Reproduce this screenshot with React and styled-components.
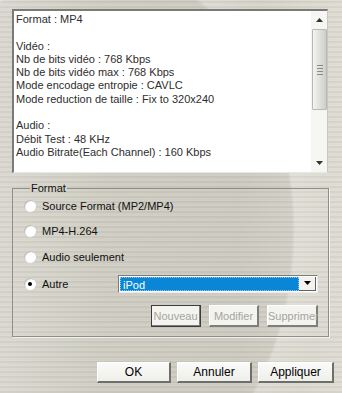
import { createGlobalStyle, styled } from "styled-components";

const Global = createGlobalStyle`
  html, body { margin: 0; padding: 0; }
  body {
    width: 342px;
    height: 393px;
    overflow: hidden;
    font-family: "DejaVu Sans", "Liberation Sans", sans-serif;
  }
`;

const Page = styled.div`
  width: 342px;
  height: 393px;
  box-sizing: border-box;
  padding: 9px 14px 0 12px;
  display: flex;
  flex-direction: column;
  background:
    repeating-linear-gradient(180deg, rgba(255,255,255,0.10) 0 1px, rgba(0,0,0,0.03) 1px 3px, rgba(255,255,255,0.06) 3px 5px),
    radial-gradient(ellipse 320px 440px at 100px 230px, rgba(0,0,0,0.04) 0 60%, rgba(255,255,255,0.18) 61%, transparent 72%),
    linear-gradient(90deg, #e2e0d6 0%, #d6d4c9 30%, #d3d1c6 70%, #dddbd1 100%);
`;

const InfoBox = styled.div`
  width: 316px;
  height: 164px;
  box-sizing: border-box;
  display: flex;
  background: #fff;
  border-top: 2px solid #7a7a76;
  border-left: 2px solid #7a7a76;
  border-right: 1px solid #c8c8c0;
  border-bottom: 1px solid #e8e8e2;
`;

const InfoText = styled.div`
  flex: 1;
  padding: 2px 0 0 2px;
  font-family: "Liberation Sans", Arial, sans-serif;
  font-size: 11px;
  line-height: 13.3px;
  color: #2e2e2e;
  white-space: pre;
  overflow: hidden;
`;

const ScrollBar = styled.div`
  width: 16px;
  display: flex;
  flex-direction: column;
  align-items: center;
  background: #f6f6f2;
`;

const Arrow = styled.div`
  height: 18px;
  display: flex;
  align-items: center;
  justify-content: center;
`;

const Thumb = styled.div`
  width: 15px;
  height: 81px;
  box-sizing: border-box;
  margin-left: 1px;
  border: 1px solid #b8b8b4;
  border-radius: 1px;
  background: linear-gradient(90deg, #f4f4f2 0%, #e4e4e0 40%, #cfcfca 100%);
  display: flex;
  flex-direction: column;
  align-items: center;
  justify-content: center;
  gap: 2px;
`;

const Grip = styled.div`
  width: 6px;
  height: 1px;
  background: #8a8a86;
`;

const Track = styled.div`
  flex: 1;
`;

const Group = styled.fieldset`
  margin: 9px 0 0 0;
  padding: 0 10px 0 11px;
  width: 316px;
  height: 155px;
  box-sizing: border-box;
  border: 1px solid #8f8f8a;
  box-shadow: 1px 1px 0 rgba(255,255,255,0.7);
  display: flex;
  flex-direction: column;
`;

const Legend = styled.legend`
  padding: 0 1px;
  margin-left: 6px;
  font-family: "Liberation Sans", Arial, sans-serif;
  font-size: 11px;
  line-height: 13px;
  color: #111;
`;

const Options = styled.div`
  display: flex;
  flex-direction: column;
  margin-top: -2px;
`;

const OptionRow = styled.label`
  height: ${(p) => p.$h}px;
  display: flex;
  align-items: center;
  gap: 6px;
  font-family: "Liberation Sans", Arial, sans-serif;
  font-size: 11px;
  color: #111;
`;

const Radio = styled.span`
  width: 12px;
  height: 12px;
  flex: none;
  border-radius: 50%;
  box-sizing: border-box;
  background: radial-gradient(circle at 60% 60%, #ffffff 0 45%, #e4e4e0 75%, #c4c4c0 100%);
  box-shadow: inset 1px 1px 0 #bdbdb8;
  display: flex;
  align-items: center;
  justify-content: center;
  &::after {
    content: "";
    width: 4px;
    height: 4px;
    border-radius: 50%;
    background: ${(p) => (p.$on ? "#000" : "transparent")};
  }
`;

const OptionLabel = styled.span`
  width: 70px;
`;

const Combo = styled.div`
  width: 200px;
  height: 18px;
  box-sizing: border-box;
  display: flex;
  background: #fff;
  border-top: 1px solid #7c7c78;
  border-left: 1px solid #7c7c78;
  border-right: 1px solid #ececea;
  border-bottom: 1px solid #ececea;
  padding: 1px;
`;

const ComboValue = styled.div`
  flex: 1;
  background: #0a86d6;
  color: #fff;
  font-size: 11px;
  line-height: 14px;
  padding-left: 2px;
  border: 1px dotted #8ec8ee;
`;

const ComboButton = styled.div`
  width: 17px;
  box-sizing: border-box;
  background: #f2f2ee;
  border-right: 1px solid #606060;
  border-bottom: 1px solid #606060;
  display: flex;
  align-items: center;
  justify-content: center;
`;

const SmallButtons = styled.div`
  display: flex;
  justify-content: flex-end;
  gap: 8px;
  margin-top: 8px;
`;

const SmallButton = styled.button`
  height: 22px;
  width: ${(p) => p.$w}px;
  padding: 0;
  box-sizing: border-box;
  background: #f3f3ef;
  font-family: "Liberation Sans", Arial, sans-serif;
  font-size: 11px;
  color: #a4a4a0;
  border-style: solid;
  border-width: 1px 2px 2px 1px;
  border-color: #ffffff #7e7e7a #7e7e7a #ffffff;
  outline: ${(p) => (p.$focus ? "1px solid #3c3c3a" : "none")};
  outline-offset: -1px;
`;

const Footer = styled.div`
  display: flex;
  justify-content: flex-end;
  gap: 6px;
  margin-top: 25px;
  margin-right: -6px;
`;

const DialogButton = styled.button`
  height: 21px;
  width: ${(p) => p.$w}px;
  padding: 0;
  box-sizing: border-box;
  background: linear-gradient(180deg, #fafaf8, #eeeeea);
  font-family: "Liberation Sans", Arial, sans-serif;
  font-size: 12px;
  color: #000;
  border-style: solid;
  border-width: 1px 2px 2px 1px;
  border-color: #ffffff #6e6e6a #6e6e6a #ffffff;
`;

const info = `Format : MP4

Vidéo :
Nb de bits vidéo : 768 Kbps
Nb de bits vidéo max : 768 Kbps
Mode encodage entropie : CAVLC
Mode reduction de taille : Fix to 320x240

Audio :
Débit Test : 48 KHz
Audio Bitrate(Each Channel) : 160 Kbps`;

const options = [
  { label: "Source Format (MP2/MP4)", h: 25 },
  { label: "MP4-H.264", h: 25 },
  { label: "Audio seulement", h: 27 },
];

export default function App() {
  return (
    <Page>
      <Global />
      <InfoBox>
        <InfoText>{info}</InfoText>
        <ScrollBar>
          <Arrow>
            <svg width="7" height="4" viewBox="0 0 7 4">
              <path d="M0 4 L3.5 0 L7 4 Z" fill="#333" />
            </svg>
          </Arrow>
          <Thumb>
            <Grip />
            <Grip />
            <Grip />
            <Grip />
          </Thumb>
          <Track />
          <Arrow>
            <svg width="7" height="4" viewBox="0 0 7 4">
              <path d="M0 0 L7 0 L3.5 4 Z" fill="#333" />
            </svg>
          </Arrow>
        </ScrollBar>
      </InfoBox>

      <Group>
        <Legend>Format</Legend>
        <Options>
          {options.map((o) => (
            <OptionRow key={o.label} $h={o.h}>
              <Radio />
              <span>{o.label}</span>
            </OptionRow>
          ))}
          <OptionRow $h={27}>
            <Radio $on />
            <OptionLabel>Autre</OptionLabel>
            <Combo>
              <ComboValue>iPod</ComboValue>
              <ComboButton>
                <svg width="7" height="4" viewBox="0 0 7 4">
                  <path d="M0 0 L7 0 L3.5 4 Z" fill="#000" />
                </svg>
              </ComboButton>
            </Combo>
          </OptionRow>
        </Options>
        <SmallButtons>
          <SmallButton $w={50} $focus disabled>Nouveau</SmallButton>
          <SmallButton $w={50} disabled>Modifier</SmallButton>
          <SmallButton $w={51} disabled>Supprimer</SmallButton>
        </SmallButtons>
      </Group>

      <Footer>
        <DialogButton $w={74}>OK</DialogButton>
        <DialogButton $w={75}>Annuler</DialogButton>
        <DialogButton $w={76}>Appliquer</DialogButton>
      </Footer>
    </Page>
  );
}
